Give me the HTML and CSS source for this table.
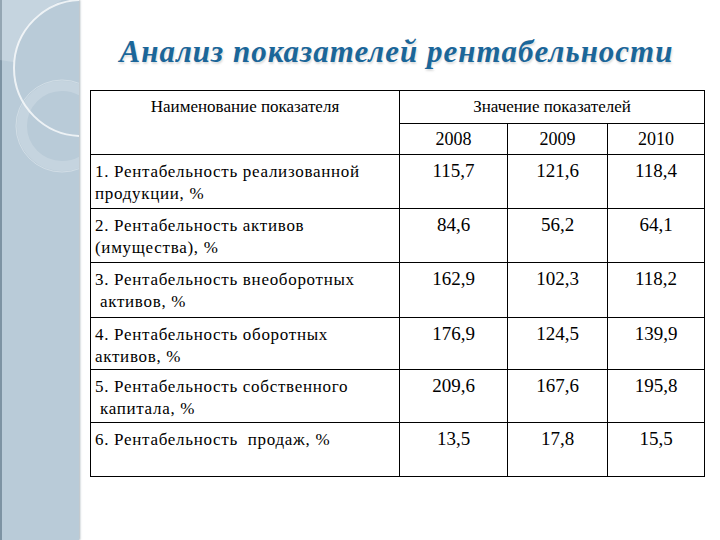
FILE: index.html
```html
<!DOCTYPE html>
<html>
<head>
<meta charset="utf-8">
<link rel="stylesheet" href="styles.css">
</head>
<body class="page">
<div class="slide">
  <div class="panel">
    <svg class="deco" width="79" height="540" viewBox="0 0 79 540">
      <path d="M0 0 H62 Q20 20 14 62 Q0 60 0 60 Z" fill="#ffffff" opacity="0.18"/>
      <circle cx="82" cy="68" r="68" fill="none" stroke="#ffffff" stroke-width="2" opacity="0.75"/>
      <circle cx="62" cy="126" r="40" fill="none" stroke="#ffffff" stroke-width="10" opacity="0.18"/>
      <circle cx="62" cy="126" r="46" fill="none" stroke="#ffffff" stroke-width="1" opacity="0.35"/>
    </svg>
  </div>
  <div class="content">
    <p class="title">Анализ показателей рентабельности</p>
    <table class="grid">
      <colgroup>
        <col class="c-name"><col class="c-y1"><col class="c-y2"><col class="c-y3">
      </colgroup>
      <thead>
        <tr class="h1">
          <th rowspan="2" class="cell name-head">Наименование показателя</th>
          <th colspan="3" class="cell">Значение показателей</th>
        </tr>
        <tr class="h2">
          <th class="cell year">2008</th><th class="cell year">2009</th><th class="cell year">2010</th>
        </tr>
      </thead>
      <tbody>
        <tr class="r1">
          <td class="cell name">1. Рентабельность реализованной<br>продукции, %</td>
          <td class="cell num">115,7</td><td class="cell num">121,6</td><td class="cell num">118,4</td>
        </tr>
        <tr class="r2">
          <td class="cell name">2. Рентабельность активов<br>(имущества), %</td>
          <td class="cell num">84,6</td><td class="cell num">56,2</td><td class="cell num">64,1</td>
        </tr>
        <tr class="r3">
          <td class="cell name">3. Рентабельность внеоборотных<br>&nbsp;активов, %</td>
          <td class="cell num">162,9</td><td class="cell num">102,3</td><td class="cell num">118,2</td>
        </tr>
        <tr class="r4">
          <td class="cell name">4. Рентабельность оборотных<br>активов, %</td>
          <td class="cell num">176,9</td><td class="cell num">124,5</td><td class="cell num">139,9</td>
        </tr>
        <tr class="r5">
          <td class="cell name">5. Рентабельность собственного<br>&nbsp;капитала, %</td>
          <td class="cell num">209,6</td><td class="cell num">167,6</td><td class="cell num">195,8</td>
        </tr>
        <tr class="r6">
          <td class="cell name">6. Рентабельность&nbsp; продаж, %</td>
          <td class="cell num">13,5</td><td class="cell num">17,8</td><td class="cell num">15,5</td>
        </tr>
      </tbody>
    </table>
  </div>
</div>
</body>
</html>
```
FILE: styles.css
```css
.page {
  margin: 0;
  padding: 0;
  background: #ffffff;
  font-family: Tinos, "Times New Roman", "Liberation Serif", serif;
}
.slide {
  display: flex;
  width: 720px;
  height: 540px;
  overflow: hidden;
  color: #000;
  font-family: Tinos, "Times New Roman", "Liberation Serif", serif;
}
.panel {
  width: 77px;
  flex: none;
  background: #b9cbd8;
  border-left: 2px solid #7d93a3;
  box-shadow: 1px 0 2px rgba(80, 100, 115, 0.5);
  position: relative;
}
.deco {
  display: block;
  position: absolute;
  left: -2px;
  top: 0;
}
.content {
  flex: 1;
  padding-left: 11px;
}
.title {
  margin: 34px 0 0 0;
  width: 613px;
  text-align: center;
  font-family: Tinos, "Times New Roman", "Liberation Serif", serif;
  font-size: 31px;
  line-height: 36px;
  letter-spacing: 1px;
  font-weight: bold;
  font-style: italic;
  color: #1b6699;
  text-shadow: 1px 2px 2px rgba(120, 120, 120, 0.25);
  height: 56px;
}
.grid {
  border-collapse: collapse;
  table-layout: fixed;
  width: 614px;
  font-family: Tinos, "Times New Roman", "Liberation Serif", serif;
}
.c-name { width: 309px; }
.c-y1 { width: 108px; }
.c-y2 { width: 100px; }
.c-y3 { width: 97px; }
.cell {
  font-family: Tinos, "Times New Roman", "Liberation Serif", serif;
  border: 1px solid #000;
  padding: 0;
  font-weight: normal;
  text-align: center;
  vertical-align: top;
  font-size: 17px;
}
.h1 .cell { height: 31px; line-height: 32px; }
.h2 .cell { height: 29px; line-height: 30px; }
.year { font-size: 18px; }
.num {
  font-size: 19px;
  line-height: 24px;
  padding-top: 4px;
}
.name {
  text-align: left;
  font-size: 17px;
  line-height: 22px;
  letter-spacing: 0.7px;
  padding-left: 4px;
  padding-top: 6px;
}
.r1 .cell { height: 47px; }
.r2 .cell { height: 47px; }
.r3 .cell { height: 48px; }
.r4 .cell { height: 45px; }
.r5 .cell { height: 46px; }
.r6 .cell { height: 47px; }
```
